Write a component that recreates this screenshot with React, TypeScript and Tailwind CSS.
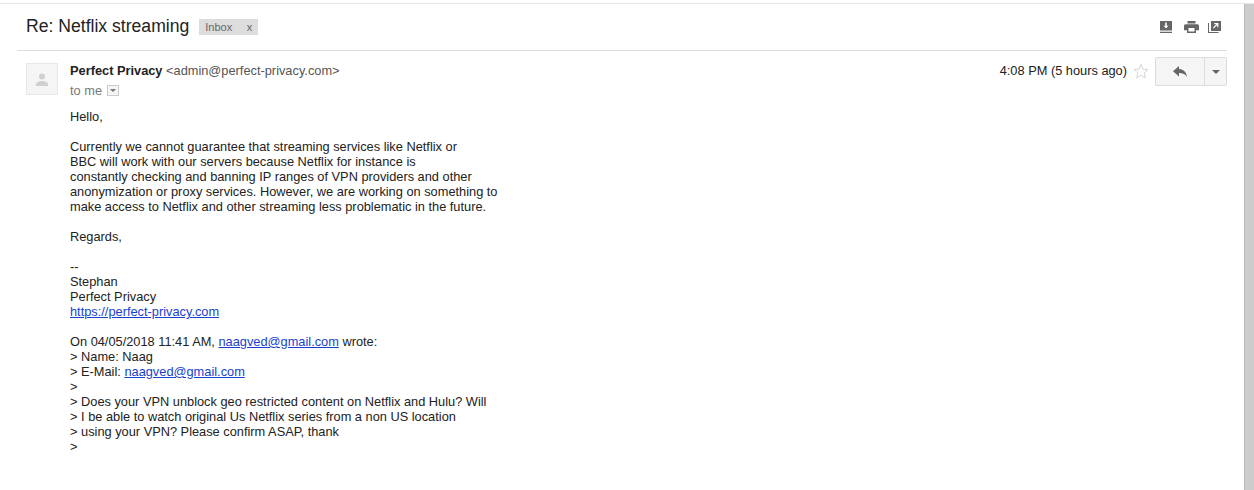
import React from 'react';

const bodyLines = [
  'Currently we cannot guarantee that streaming services like Netflix or',
  'BBC will work with our servers because Netflix for instance is',
  'constantly checking and banning IP ranges of VPN providers and other',
  'anonymization or proxy services. However, we are working on something to',
  'make access to Netflix and other streaming less problematic in the future.',
];

const Mail = ({ children }: { children: React.ReactNode }) => (
  <a className="text-[#1a3fd0] underline">{children}</a>
);

const ToolbarIcons = () => (
  <div className="flex items-center text-[#666]">
    <svg width="12" height="12" viewBox="0 0 12 12">
      <path fill="#666" fillRule="evenodd" d="M0 0h12v9.500H0zM5.200 1.500v3.300H3.500L6 7.500l2.500-2.700H6.800V1.500zM0 10.700h12V12H0z" />
    </svg>
    <svg className="ml-[12px]" width="15" height="12" viewBox="0 0 15 12">
      <path fill="#666" fillRule="evenodd" d="M3.500 0h8v2.500h-8zM1.500 3.200h12A1.500 1.500 0 0 1 15 4.700v4.500h-3V12H3V9.200H0V4.700a1.500 1.500 0 0 1 1.500-1.500zM4.500 7v3.500h6V7z" />
    </svg>
    <svg className="ml-[9px]" width="13" height="12" viewBox="0 0 13 12">
      <path fill="#666" fillRule="evenodd" d="M3 0h10v10H3zM6.200 2v1.200h2.200L5 6.600l.8.8 3.400-3.400v2.200h1.200V2zM0 2h1v9h9.500v1H0z" />
    </svg>
  </div>
);

export default function App() {
  return (
    <div className="h-[490px] w-[1254px] overflow-hidden bg-white font-['Liberation_Sans',Arial,sans-serif] text-[12.8px] text-[#222]">
      <div className="mt-[3px] flex h-[487px] border-t border-[#e5e5e5]">
        <main className="min-w-0 flex-1">
          <header className="ml-[17px] mr-[17px] flex h-[47px] items-center justify-between border-b border-[#dcdcdc] pb-[1px] pl-[9px] pr-[6px]">
            <div className="flex items-center">
              <h1 className="mb-[2px] text-[17.6px] leading-6 text-[#222]">Re: Netflix streaming</h1>
              <span className="ml-[10px] flex h-4 w-[59px] items-center justify-between bg-[#dddddd] pl-[6px] pr-[6px] pt-[2px] text-[11px] text-[#666]">
                <span>Inbox</span>
                <span>x</span>
              </span>
            </div>
            <ToolbarIcons />
          </header>

          <section className="flex pl-[26px] pr-[17px] pt-[12px]">
            <div className="flex h-8 w-8 items-center justify-center border border-[#e8e8e8] bg-[#f5f5f5]">
              <svg width="12" height="13" viewBox="0 0 12 13">
                <circle cx="6" cy="3.500" r="3" fill="#d0d0d0" />
                <path fill="#d0d0d0" d="M0 13v-1.500C0 9.500 3 8 6 8s6 1.500 6 3.500V13z" />
              </svg>
            </div>
            <div className="ml-3 min-w-0 flex-1">
              <div className="flex items-start justify-between">
                <div>
                  <div className="mt-[-1px] leading-[17px]">
                    <span className="font-bold">Perfect Privacy</span>{' '}
                    <span className="text-[#555]">&lt;admin@perfect-privacy.com&gt;</span>
                  </div>
                  <div className="mt-[3px] flex items-center leading-[17px] text-[#777]">
                    to me
                    <span className="ml-[5px] flex h-[11px] w-[12px] items-center justify-center border border-[#ccc] bg-[#f5f5f5]">
                      <span className="h-0 w-0 border-x-[3px] border-t-[3px] border-x-transparent border-t-[#777]" />
                    </span>
                  </div>
                </div>
                <div className="mt-[-6px] flex items-start">
                  <span className="mt-[5px] leading-[17px]">4:08 PM (5 hours ago)</span>
                  <svg className="ml-[6px] mt-[6px]" width="16" height="16" viewBox="0 0 24 24">
                    <path fill="none" stroke="#d5d5d5" strokeWidth="1.500" d="M12 2l3 7.200 7.500.6-5.700 5 1.800 7.600L12 18.300l-6.600 4.100 1.800-7.600-5.700-5 7.500-.6z" />
                  </svg>
                  <div className="ml-[6px] flex h-[29px] w-[72px] rounded-[2px] border border-[#dcdcdc] bg-[#f5f5f5]">
                    <div className="flex w-[49px] items-center justify-center border-r border-[#dcdcdc]">
                      <svg width="14" height="11" viewBox="0 0 14 11">
                        <path fill="#666" d="M6 0v3C11 3.500 13.500 6.500 14 11 12.500 8.500 10 7 6 7v3.500L0 5.200z" />
                      </svg>
                    </div>
                    <div className="flex flex-1 items-center justify-center">
                      <span className="h-0 w-0 border-x-[4px] border-t-[4px] border-x-transparent border-t-[#666]" />
                    </div>
                  </div>
                </div>
              </div>

              <div className="mt-[10px] leading-[15px] text-[#222]">
                <div>Hello,</div>
                <div className="mt-[15px]">
                  {bodyLines.map((line) => (
                    <div key={line}>{line}</div>
                  ))}
                </div>
                <div className="mt-[15px]">Regards,</div>
                <div className="mt-[15px]">--</div>
                <div>Stephan</div>
                <div>Perfect Privacy</div>
                <div><Mail>https://perfect-privacy.com</Mail></div>
                <div className="mt-[15px]">
                  On 04/05/2018 11:41 AM, <Mail>naagved@gmail.com</Mail> wrote:
                </div>
                <div>&gt; Name: Naag</div>
                <div>&gt; E-Mail: <Mail>naagved@gmail.com</Mail></div>
                <div>&gt;</div>
                <div>&gt; Does your VPN unblock geo restricted content on Netflix and Hulu? Will</div>
                <div>&gt; I be able to watch original Us Netflix series from a non US location</div>
                <div>&gt; using your VPN? Please confirm ASAP, thank</div>
                <div>&gt;</div>
              </div>
            </div>
          </section>
        </main>
        <div className="w-[10px] shrink-0 border-l border-[#bbbbbb] bg-[#cccccc]" />
      </div>
    </div>
  );
}
